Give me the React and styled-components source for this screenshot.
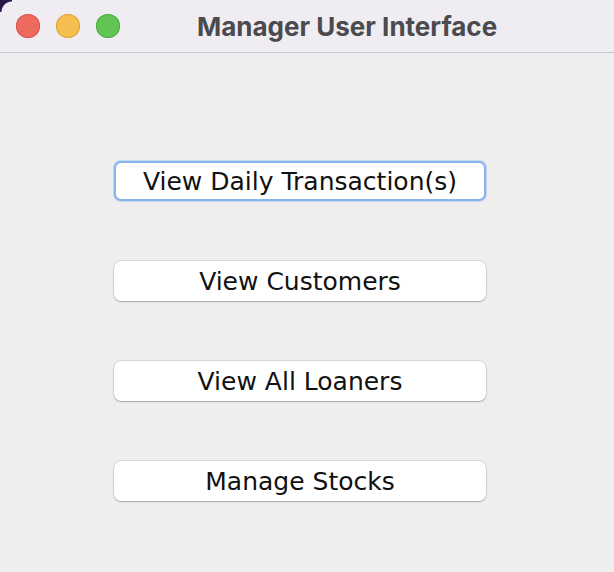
import React from "react";
import styled, { createGlobalStyle } from "styled-components";

const GlobalStyle = createGlobalStyle`
  html, body {
    margin: 0;
    padding: 0;
    background: #eeeeee;
  }
  #root {
    width: 614px;
    height: 572px;
    overflow: hidden;
  }
`;

const Window = styled.div`
  position: relative;
  width: 614px;
  height: 572px;
  background: #eeeeee;
  display: flex;
  flex-direction: column;
`;

const Corner = styled.div`
  position: absolute;
  left: 0;
  top: 0;
  width: 12px;
  height: 12px;
  background: radial-gradient(circle at 12px 12px, transparent 10px, #2a1747 11px);
`;

const TitleBar = styled.div`
  height: 52px;
  flex: none;
  display: flex;
  align-items: center;
  background: #efedf2;
  border-bottom: 1px solid #c9c8cc;
  padding-left: 16px;
`;

const Lights = styled.div`
  display: flex;
  gap: 16px;
`;

const Light = styled.span`
  width: 24px;
  height: 24px;
  border-radius: 50%;
  background: ${p => p.color};
  box-shadow: inset 0 0 0 1px ${p => p.edge};
`;

const Title = styled.div`
  margin-left: 77px;
  font-family: Inter, "Noto Sans", sans-serif;
  font-weight: 700;
  font-size: 26px;
  color: #4b4a4e;
`;

const Body = styled.div`
  flex: 1;
  display: flex;
  flex-direction: column;
  align-items: flex-start;
  padding: 108px 0 0 114px;
  gap: 60px;
`;

const Button = styled.button`
  width: 372px;
  height: 40px;
  box-sizing: border-box;
  background: #ffffff;
  border: ${p => (p.focused ? "2px solid #8ab4ee" : "none")};
  border-radius: 7px;
  box-shadow: ${p =>
    p.focused
      ? "0 0 0 1px rgba(120,165,230,0.35)"
      : "0 0 0 0.5px rgba(0,0,0,0.18), 0 1px 1.5px rgba(0,0,0,0.22)"};
  font-family: "DejaVu Sans", sans-serif;
  font-size: 25px;
  color: #111111;
  padding: 0;
  display: flex;
  align-items: center;
  justify-content: center;
`;

const items = [
  "View Daily Transaction(s)",
  "View Customers",
  "View All Loaners",
  "Manage Stocks",
];

export default function App() {
  return (
    <>
      <GlobalStyle />
      <Window>
        <Corner />
        <TitleBar>
          <Lights>
            <Light color="#ee6a5f" edge="#d6574d" />
            <Light color="#f5be4f" edge="#dca33b" />
            <Light color="#61c454" edge="#4fad43" />
          </Lights>
          <Title>Manager User Interface</Title>
        </TitleBar>
        <Body>
          {items.map((label, i) => (
            <Button key={label} focused={i === 0}>
              {label}
            </Button>
          ))}
        </Body>
      </Window>
    </>
  );
}
